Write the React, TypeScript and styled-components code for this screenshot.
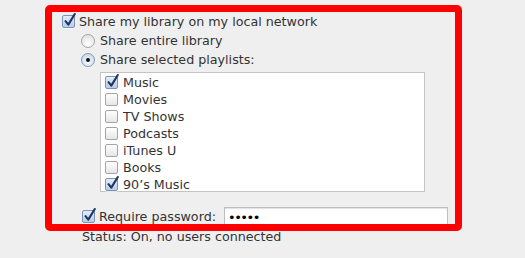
import * as React from 'react';
import styled, {createGlobalStyle} from 'styled-components';

const GlobalStyle = createGlobalStyle`
	html, body {
		margin: 0;
		padding: 0;
		background: #efefef;
	}
	body {
		font-family: "DejaVu Sans", "Liberation Sans", sans-serif;
		font-size: 12.7px;
		color: #333;
	}
`;

const Panel = styled.div`
	position: relative;
	width: 525px;
	height: 258px;
	overflow: hidden;
	background: #efefef;
`;

const Content = styled.div`
	display: flex;
	flex-direction: column;
	align-items: flex-start;
	padding: 12px 0 0 62px;
`;

const Row = styled.label`
	display: flex;
	align-items: center;
	gap: ${(props: {gap?: number}) => props.gap ?? 5}px;
	height: 19px;
	white-space: nowrap;
`;

const RadioRow = styled(Row)`
	margin-left: 19px;
`;

const Box = styled.span`
	position: relative;
	flex: none;
	width: 13px;
	height: 13px;
	box-sizing: border-box;
	border: 1px solid ${(props: {checked?: boolean}) => props.checked ? '#7b93b8' : '#a4a4a4'};
	border-radius: 2px;
	background: ${(props: {checked?: boolean}) =>
		props.checked ?
			'linear-gradient(#e4edf8, #b9cde6)' :
			'linear-gradient(#ffffff, #e6e6e6)'
	};
	box-shadow: 0 1px 0 rgba(255, 255, 255, 0.6);

	svg {
		position: absolute;
		left: 0;
		top: -3px;
		overflow: visible;
	}
`;

const Radio = styled.span`
	position: relative;
	flex: none;
	width: 14px;
	height: 14px;
	box-sizing: border-box;
	border-radius: 50%;
	border: 1px solid ${(props: {checked?: boolean}) => props.checked ? '#8197b8' : '#a8a8a8'};
	background: ${(props: {checked?: boolean}) =>
		props.checked ?
			'radial-gradient(circle at 50% 70%, #f2f7fd, #c3d4ea)' :
			'radial-gradient(circle at 50% 75%, #ffffff, #dcdcdc)'
	};

	&:after {
		content: '';
		display: ${(props: {checked?: boolean}) => props.checked ? 'block' : 'none'};
		position: absolute;
		left: 4px;
		top: 4px;
		width: 4px;
		height: 4px;
		border-radius: 50%;
		background: #111;
	}
`;

const List = styled.ul`
	list-style: none;
	margin: 3px 0 0 38px;
	padding: 1px 0 0;
	width: 325px;
	height: 120px;
	box-sizing: border-box;
	background: #fff;
	border: 1px solid #c4c4c4;
`;

const Item = styled.li`
	display: flex;
	align-items: center;
	gap: 5px;
	height: 17px;
	padding-left: 4px;
`;

const PasswordRow = styled.div`
	display: flex;
	align-items: center;
	height: 22px;
	margin: 13px 0 0 20px;
`;

const PasswordLabel = styled.label`
	display: flex;
	align-items: center;
	gap: 4px;
	white-space: nowrap;
`;

const Field = styled.div`
	width: 224px;
	height: 21px;
	box-sizing: border-box;
	margin-left: 8px;
	margin-top: 2px;
	padding: 0 0 0 3px;
	background: #fff;
	border: 1px solid #bfbfbf;
	box-shadow: inset 0 1px 1px rgba(0, 0, 0, 0.12);
	font-size: 13px;
	line-height: 19px;
	letter-spacing: -1.5px;
	color: #000;
`;

const Status = styled.div`
	margin: 2px 0 0 20px;
	height: 16px;
	line-height: 16px;
`;

const Highlight = styled.div`
	position: absolute;
	left: 45px;
	top: 5px;
	width: 417px;
	height: 226px;
	box-sizing: border-box;
	border: 7px solid #ff0000;
	border-radius: 5px;
	pointer-events: none;
`;

const Check = () => (
	<svg width="13" height="13" viewBox="0 0 13 13">
		<path d="M2.5 8.2 L5.3 11.6 L11.8 1" fill="none" stroke="#1d3563" strokeWidth="2.1" strokeLinecap="round" strokeLinejoin="round" />
	</svg>
);

const CheckBox = ({checked}: {checked?: boolean}) => (
	<Box checked={checked}>{checked ? <Check /> : null}</Box>
);

const playlists = [
	{name: 'Music', checked: true},
	{name: 'Movies', checked: false},
	{name: 'TV Shows', checked: false},
	{name: 'Podcasts', checked: false},
	{name: 'iTunes U', checked: false},
	{name: 'Books', checked: false},
	{name: '90\u2019s Music', checked: true},
];

export default function App() {
	return (
		<Panel>
			<GlobalStyle />
			<Content>
				<Row gap={4}>
					<CheckBox checked />
					Share my library on my local network
				</Row>
				<RadioRow>
					<Radio />
					Share entire library
				</RadioRow>
				<RadioRow>
					<Radio checked />
					Share selected playlists:
				</RadioRow>
				<List>
					{playlists.map(p => (
						<Item key={p.name}>
							<CheckBox checked={p.checked} />
							{p.name}
						</Item>
					))}
				</List>
				<PasswordRow>
					<PasswordLabel>
						<CheckBox checked />
						Require password:
					</PasswordLabel>
					<Field>•••••</Field>
				</PasswordRow>
				<Status>Status: On, no users connected</Status>
			</Content>
			<Highlight />
		</Panel>
	);
}
